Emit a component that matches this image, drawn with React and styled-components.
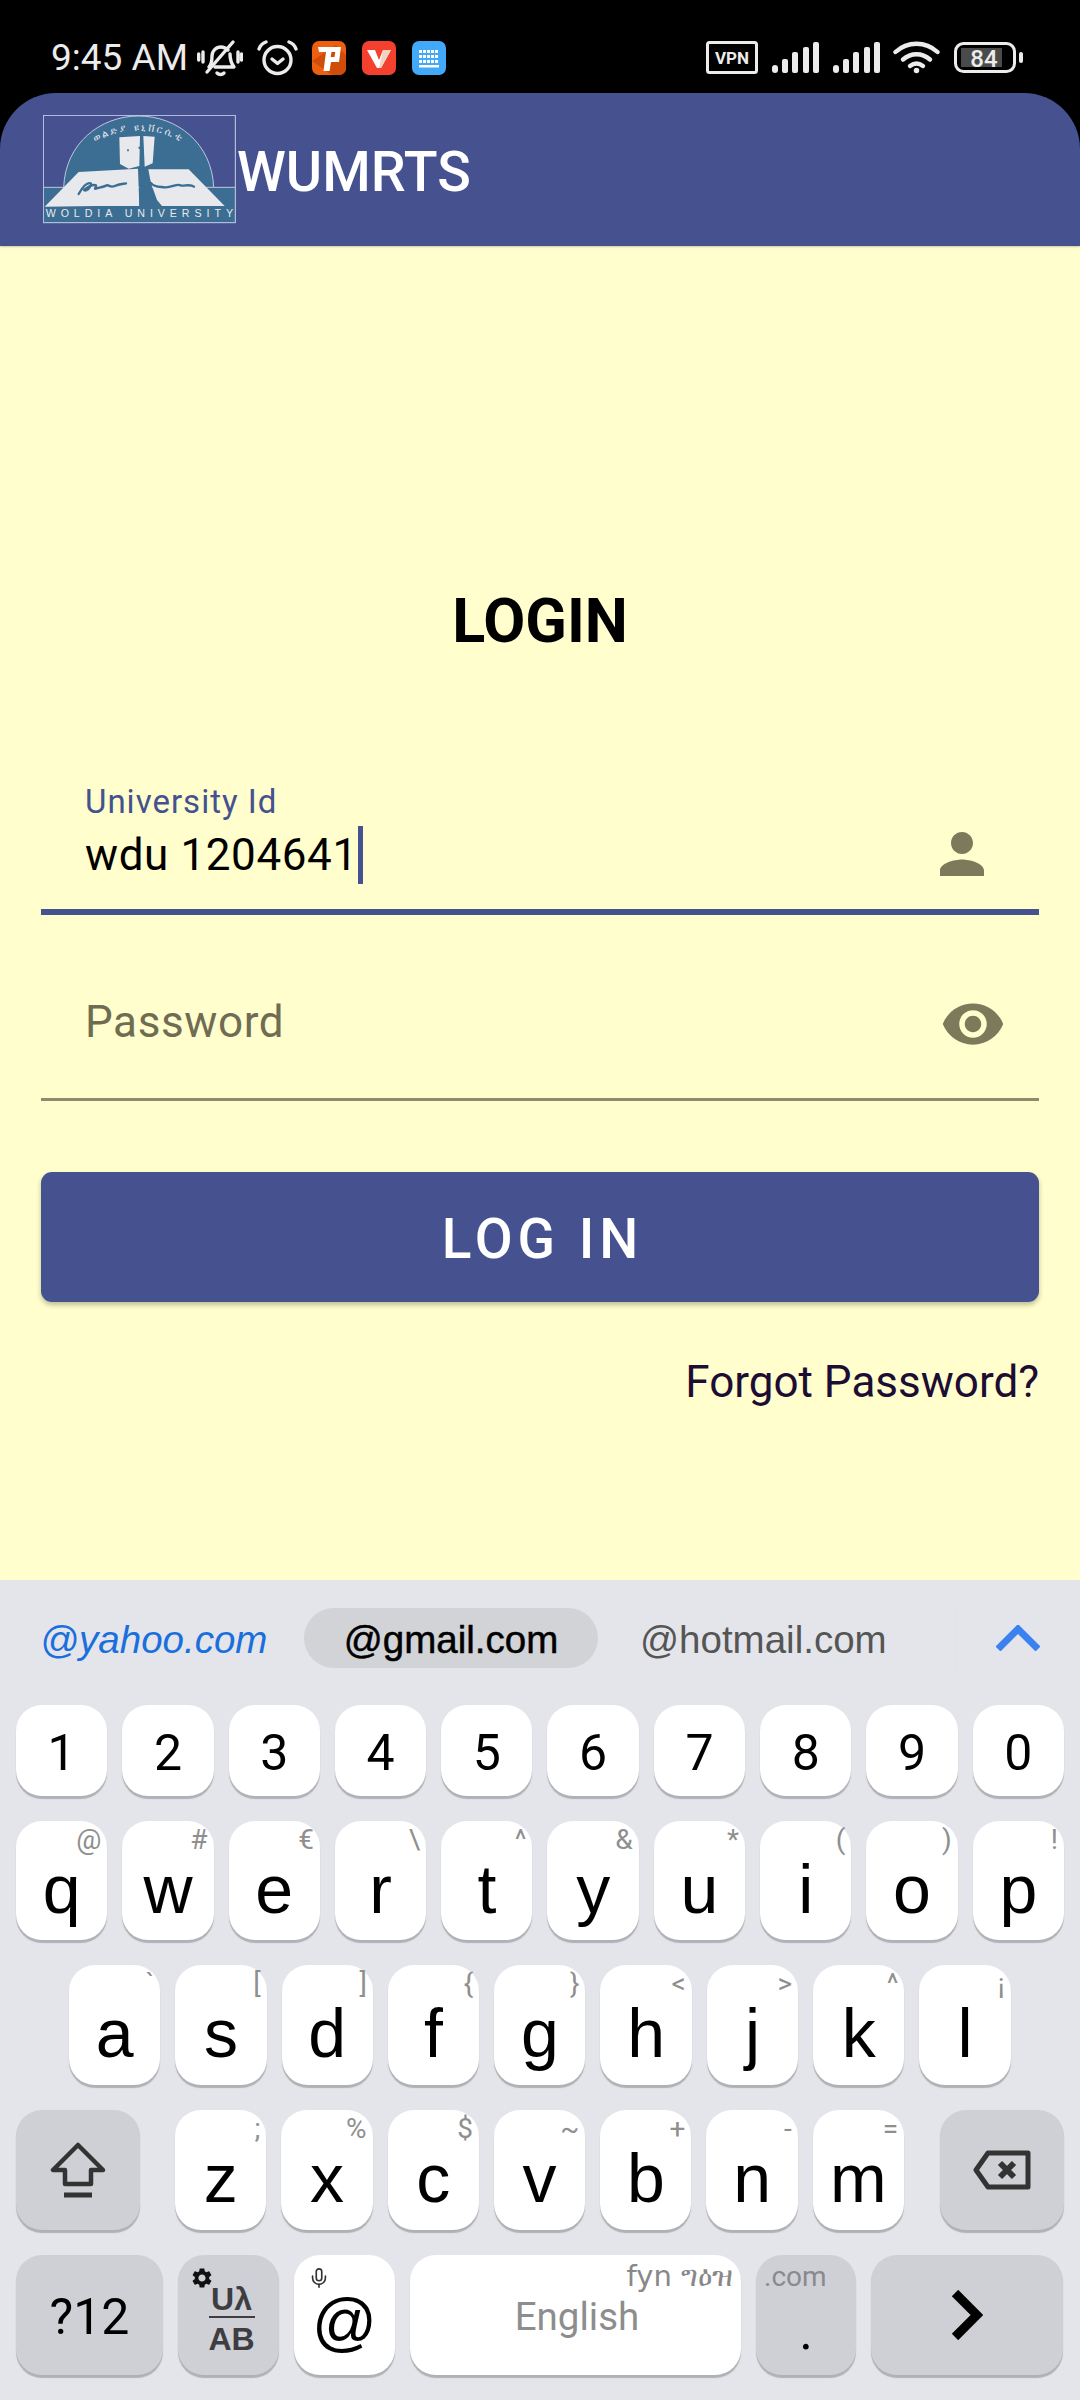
import React from "react";
import styled, { createGlobalStyle } from "styled-components";
import { MdSettings } from "react-icons/md";
import { Mic } from "lucide-react";

const GlobalStyle = createGlobalStyle`
  html, body {
    margin: 0;
    padding: 0;
    background: #000;
  }
  * {
    box-sizing: border-box;
  }
`;

const Page = styled.div`
  width: 1080px;
  height: 2400px;
  display: flex;
  flex-direction: column;
  background: #000;
  font-family: Roboto, sans-serif;
  overflow: hidden;
`;

/* status bar */
const StatusBar = styled.div`
  height: 93px;
  flex: none;
  display: flex;
  align-items: center;
  justify-content: space-between;
  padding: 22px 57px 0 51px;
  color: #ececec;
`;
const StatusGroup = styled.div`
  display: flex;
  align-items: center;
`;
const Clock = styled.span`
  font-size: 37px;
  line-height: 40px;
  margin-right: 9px;
`;
const StatusIcon = styled.svg`
  display: block;
  flex: none;
  margin-left: ${(p) => p.$gap || 0}px;
`;

/* app bar */
const AppBar = styled.header`
  height: 153px;
  flex: none;
  display: flex;
  align-items: center;
  padding: 0 0 0 43px;
  background: #45528f;
  border-radius: 56px 56px 0 0;
  box-shadow: 0 1px 2px rgba(0, 0, 0, 0.2);
  position: relative;
  z-index: 1;
`;
const LogoSvg = styled.svg`
  display: block;
  flex: none;
`;
const Title = styled.h1`
  margin: 7px 0 0 0;
  color: #fff;
  font-size: 55.5px;
  font-weight: 500;
  line-height: 64px;
`;

/* login form */
const Main = styled.main`
  height: 1334px;
  flex: none;
  display: flex;
  flex-direction: column;
  padding: 340px 41px 0;
  background: #fffecc;
`;
const Heading = styled.h2`
  margin: 0;
  text-align: center;
  color: #000;
  font-size: 61px;
  font-weight: 700;
  line-height: 70px;
`;
const Field = styled.div`
  display: flex;
  align-items: flex-end;
  justify-content: space-between;
  height: ${(p) => p.$height}px;
  margin-top: ${(p) => p.$top}px;
  padding: 0 ${(p) => p.$iconInset}px ${(p) => p.$pad}px 44px;
  border-bottom: ${(p) => (p.$focused ? "6px solid #45528f" : "3px solid #8f8c6e")};
`;
const FieldText = styled.div`
  display: flex;
  flex-direction: column;
  margin-bottom: ${(p) => p.$lift}px;
`;
const FloatLabel = styled.label`
  color: #45528f;
  font-size: 33px;
  line-height: 40px;
  letter-spacing: 1px;
  margin-bottom: 9px;
`;
const Value = styled.div`
  display: flex;
  align-items: center;
  height: 48px;
  color: #000;
  font-size: 44px;
  line-height: 48px;
  letter-spacing: 0.6px;
  white-space: nowrap;
`;
const Placeholder = styled(Value)`
  color: #6f6c53;
`;
const Caret = styled.span`
  flex: none;
  width: 5px;
  height: 58px;
  background: #45528f;
`;
const FieldIcon = styled.svg`
  display: block;
  flex: none;
  fill: #7d7a5c;
`;
const LoginButton = styled.button`
  height: 130px;
  margin-top: 71px;
  padding: 4px 0 0 5px;
  border: 0;
  border-radius: 11px;
  background: #45528f;
  color: #fff;
  font-family: Roboto, sans-serif;
  font-size: 55px;
  font-weight: 500;
  letter-spacing: 5px;
  box-shadow: 0 3px 5px rgba(0, 0, 0, 0.25);
`;
const ForgotLink = styled.a`
  margin-top: 55px;
  text-align: right;
  color: #1d0c33;
  font-size: 44px;
  line-height: 50px;
`;

/* keyboard */
const Keyboard = styled.section`
  height: 820px;
  flex: none;
  display: flex;
  flex-direction: column;
  background: #e4e5ea;
`;
const SuggestStrip = styled.div`
  height: 125px;
  flex: none;
  display: flex;
  align-items: center;
  padding: 0 40px 9px 40px;
  font-family: "Liberation Sans", Arial, sans-serif;
  font-size: 38.5px;
`;
const Suggestion = styled.span`
  flex: none;
  width: ${(p) => p.$width}px;
  margin-left: ${(p) => p.$left || 0}px;
  height: 60px;
  line-height: 64px;
  text-align: ${(p) => (p.$pill ? "center" : "left")};
  color: ${(p) => p.$color};
  font-style: ${(p) => (p.$italic ? "italic" : "normal")};
  background: ${(p) => (p.$pill ? "#d2d3d6" : "transparent")};
  border-radius: 30px;
  -webkit-text-stroke: ${(p) => (p.$pill ? "0.5px #000" : "0")};
`;
const StripDivider = styled.span`
  width: 2px;
  height: 62px;
  background: #e1e2e7;
`;
const ExpandIcon = styled.svg`
  display: block;
  flex: none;
  margin-left: 40px;
`;
const KeyGrid = styled.div`
  display: grid;
  grid-template-rows: 94px 122px 123px 123px 123px;
  row-gap: 22px;
  padding: 0 16px;
`;
const KeyRow = styled.div`
  display: flex;
  column-gap: ${(p) => (p.$gap === undefined ? 15 : p.$gap)}px;
  padding-left: ${(p) => p.$inset || 0}px;
`;
const InnerRow = styled(KeyRow)`
  margin: 0 36px 0 35px;
`;
const Key = styled.div`
  position: relative;
  flex: none;
  width: ${(p) => p.$width || 91.3}px;
  height: calc(100% - 3px);
  display: flex;
  justify-content: center;
  align-items: ${(p) => (p.$centered ? "center" : "flex-start")};
  padding-top: ${(p) => (p.$digit ? 4 : p.$centered ? 0 : 34)}px;
  border-radius: 26px;
  background: ${(p) => (p.$special ? "#cfd0d6" : "#fff")};
  box-shadow: 0 3px 1px #b0b1b6;
  color: #000;
  font-family: ${(p) => (p.$digit ? "Roboto" : '"Liberation Sans"')}, sans-serif;
  font-size: ${(p) => (p.$digit ? 50 : 68)}px;
  line-height: ${(p) => (p.$digit ? "50px" : "68px")};
`;
const Hint = styled.span`
  position: absolute;
  top: 4px;
  right: 6px;
  color: #8f8f8f;
  font-family: Roboto, sans-serif;
  font-size: 28px;
  line-height: 30px;
`;
const LangStack = styled.div`
  display: flex;
  flex-direction: column;
  align-items: center;
  width: 46px;
  margin: 8px 0 0 6px;
  color: #3d3d42;
  font-family: "Liberation Sans", sans-serif;
  font-size: 32px;
  font-weight: 700;
  line-height: 26px;
`;
const LangTop = styled.span`
  width: 100%;
  padding-bottom: 4px;
  text-align: center;
  border-bottom: 2px solid #3d3d42;
  margin-bottom: 8px;
  white-space: nowrap;
`;
const GearBadge = styled.span`
  position: absolute;
  top: 11px;
  left: 12px;
  display: flex;
  color: #111;
`;
const MicBadge = styled.span`
  position: absolute;
  top: 12px;
  left: 14px;
  display: flex;
  color: #333;
`;
const AtGlyph = styled.span`
  font-size: 64px;
  line-height: 64px;
  margin-top: 14px;
`;
const SpaceLabel = styled.span`
  color: #8d8d8d;
  font-family: Roboto, sans-serif;
  font-size: 38.5px;
  line-height: 48px;
  margin: 4px 0 0 3px;
`;
const SpaceHint = styled.span`
  position: absolute;
  top: 3px;
  right: 8px;
  color: #888;
  font-family: "DejaVu Sans", Roboto, sans-serif;
  font-size: 29px;
  line-height: 36px;
  white-space: nowrap;
`;
const ComHint = styled.span`
  position: absolute;
  top: 6px;
  left: 8px;
  color: #8a8a8e;
  font-family: Roboto, sans-serif;
  font-size: 28px;
  line-height: 32px;
`;
const PeriodGlyph = styled.span`
  margin-top: 34px;
  font-family: Roboto, sans-serif;
  font-size: 52px;
  line-height: 52px;
`;

const BellMuted = () => (
  <StatusIcon width="46" height="38" viewBox="0 0 46 38" fill="none" stroke="#ececec" strokeWidth="3.4" strokeLinecap="round" strokeLinejoin="round">
    <path d="M12 28c3-3 3-7 3-11 0-5 4-9 9-9 3 0 5 1 7 3" />
    <path d="M33 15c0 5 1 9 4 13H18" />
    <path d="M20 34c2 2 5 2 7 0" />
    <path d="M10 33 36 3" />
    <path d="M6 13v10M1.7 15v6M41 13v10M44.5 15v6" />
  </StatusIcon>
);

const AlarmIcon = () => (
  <StatusIcon $gap={14} width="41" height="36" viewBox="0 0 41 36" fill="none" stroke="#ececec" strokeWidth="3.4" strokeLinecap="round" strokeLinejoin="round">
    <circle cx="20.5" cy="20" r="13.5" />
    <path d="M15 19l5.5 4.5L26 19" />
    <path d="M2 9c1-3 4-6 7-7M39 9c-1-3-4-6-7-7" />
  </StatusIcon>
);

const PsiphonIcon = () => (
  <StatusIcon $gap={14} width="34" height="34" viewBox="0 0 34 34">
    <rect width="34" height="34" rx="7" fill="#ec5f10" />
    <path d="M0 20 20 34H27a7 7 0 0 0 7-7V14L24 4Z" fill="#cf4d08" />
    <path fillRule="evenodd" d="M6 6H29L27 21H19L17.5 30H11.5L14 11H7ZM19.5 11 18.7 16H22.5L23.3 11Z" fill="#fff" />
  </StatusIcon>
);

const VidmateIcon = () => (
  <StatusIcon $gap={16} width="34" height="34" viewBox="0 0 34 34">
    <rect width="34" height="34" rx="7" fill="#f4402f" />
    <path d="M5 9h8l4 10 4-10h8L19 27h-4Z" fill="#fff" />
    <path d="M21 9h8L19 27h-2Z" fill="#f1d4c0" />
  </StatusIcon>
);

const KeypadIcon = () => (
  <StatusIcon $gap={16} width="34" height="34" viewBox="0 0 34 34">
    <rect width="34" height="34" rx="7" fill="#42a8f8" />
    <g fill="#fff">
      {[9, 14, 19].map((y) =>
        [7, 11, 15, 19, 23].map((x) => <rect key={`${x}-${y}`} x={x} y={y} width="3" height="3" />)
      )}
      <rect x="7" y="24" width="20" height="2.5" />
    </g>
  </StatusIcon>
);

const VpnBadge = () => (
  <StatusIcon width="52" height="33" viewBox="0 0 52 33">
    <rect x="1.5" y="1.5" width="49" height="30" rx="2" fill="none" stroke="#ececec" strokeWidth="3" />
    <text x="26" y="23" textAnchor="middle" fill="#ececec" fontFamily="Roboto, sans-serif" fontWeight="700" fontSize="17">VPN</text>
  </StatusIcon>
);

const SignalIcon = ({ gap }) => (
  <StatusIcon $gap={gap} width="47" height="31" viewBox="0 0 47 31" fill="#ececec">
    <rect x="0" y="23" width="6" height="8" rx="3" />
    <rect x="10" y="17" width="6" height="14" rx="2" />
    <rect x="20" y="10" width="6" height="21" rx="2" />
    <rect x="31" y="5" width="6" height="26" rx="2" />
    <rect x="41" y="0" width="6" height="31" rx="2" />
  </StatusIcon>
);

const WifiIcon = () => (
  <StatusIcon $gap={13} width="47" height="33" viewBox="0 0 47 33" fill="none" stroke="#ececec" strokeWidth="4.4" strokeLinecap="round">
    <path d="M2.5 11c12-11 30-11 42 0" />
    <path d="M10 18.5c8-7 19-7 27 0" />
    <path d="M17 25c4-3 9-3 13 0" />
    <circle cx="23.5" cy="29.5" r="2" fill="#ececec" stroke="#ececec" strokeWidth="1.5" />
  </StatusIcon>
);

const BatteryIcon = () => (
  <StatusIcon $gap={14} width="69" height="31" viewBox="0 0 69 31">
    <rect x="1.5" y="1.5" width="59" height="28" rx="8" fill="none" stroke="#ececec" strokeWidth="3" />
    <rect x="7" y="6" width="41" height="19" fill="#4a4a4a" />
    <text x="30" y="24.5" textAnchor="middle" fill="#ececec" fontFamily="Roboto, sans-serif" fontWeight="500" fontSize="24">84</text>
    <rect x="65" y="10" width="4" height="11" rx="2" fill="#ececec" />
  </StatusIcon>
);

const UniversityLogo = () => (
  <LogoSvg width="194" height="109" viewBox="43 45 582 327">
    <rect x="44" y="262" width="576" height="106" fill="#3c6d92" />
    <path d="M105 262C110 130 215 48 330 48s220 82 225 214Z" fill="#3c6d92" stroke="#d7dced" strokeWidth="2.5" />
    <path d="M44 262h61M555 262h65" stroke="#d7dced" strokeWidth="2.5" />
    <rect x="44" y="46" width="576" height="322" fill="none" stroke="#c9cfea" strokeWidth="3" />
    <path d="M48 320 150 216 328 206 332 318 200 318Z" fill="#e8e9ec" />
    <path d="M352 208 480 208 588 318 400 318 385 300Z" fill="#e8e9ec" />
    <path d="M272 112 334 108 332 198 300 206 274 192Z" fill="#e8e9ec" />
    <path d="M344 108 378 110 372 190 348 200Z" fill="#e8e9ec" />
    <path d="M332 203h26l22 115h-48Z" fill="#3c6d92" />
    <path d="M150 282c10-18 24-36 36-32 6 4-12 28-20 20 10-8 26-18 36-14 2 6-8 12 0 10 14-4 24-6 32-10 8-2 10 8 24 2 12-6 22-6 34-8M368 250c8 12 28 10 40 12 20 2 36-12 48-6 10 4 26-6 40 4" fill="none" stroke="#3c6d92" strokeWidth="7" strokeLinecap="round" strokeLinejoin="round" />
    <path d="M298 148v6M332 140v6" stroke="#3c6d92" strokeWidth="5" />
    <path id="logoArc" d="M142 215C150 135 240 92 330 92s180 43 188 123" fill="none" />
    <text fill="#e8e9ec" fontFamily="DejaVu Sans, sans-serif" fontSize="30" letterSpacing="7">
      <textPath href="#logoArc" startOffset="50%" textAnchor="middle">ወልድያ ዩኒቨርሲቲ</textPath>
    </text>
    <text x="332" y="350" textAnchor="middle" fill="#e8e9ec" fontFamily="Liberation Sans, sans-serif" fontSize="32" textLength="562">WOLDIA UNIVERSITY</text>
  </LogoSvg>
);

const numberRow = ["1", "2", "3", "4", "5", "6", "7", "8", "9", "0"];
const topRow = [["q", "@"], ["w", "#"], ["e", "€"], ["r", "\\"], ["t", "^"], ["y", "&"], ["u", "*"], ["i", "("], ["o", ")"], ["p", "!"]];
const homeRow = [["a", "`"], ["s", "["], ["d", "]"], ["f", "{"], ["g", "}"], ["h", "<"], ["j", ">"], ["k", "^"], ["l", "¡"]];
const bottomRow = [["z", ";"], ["x", "%"], ["c", "$"], ["v", "~"], ["b", "+"], ["n", "-"], ["m", "="]];

const LetterKey = ({ letter, hint }) => (
  <Key>
    {letter}
    <Hint>{hint}</Hint>
  </Key>
);

export default function App() {
  return (
    <Page>
      <GlobalStyle />
      <StatusBar>
        <StatusGroup>
          <Clock>9:45 AM</Clock>
          <BellMuted />
          <AlarmIcon />
          <PsiphonIcon />
          <VidmateIcon />
          <KeypadIcon />
        </StatusGroup>
        <StatusGroup>
          <VpnBadge />
          <SignalIcon gap={14} />
          <SignalIcon gap={14} />
          <WifiIcon />
          <BatteryIcon />
        </StatusGroup>
      </StatusBar>

      <AppBar>
        <UniversityLogo />
        <Title>WUMRTS</Title>
      </AppBar>

      <Main>
        <Heading>LOGIN</Heading>
        <Field $focused $top={126} $height={133} $pad={22} $iconInset={44}>
          <FieldText $lift={8}>
            <FloatLabel>University Id</FloatLabel>
            <Value>
              wdu 1204641
              <Caret />
            </Value>
          </FieldText>
          <FieldIcon width="66" height="66" viewBox="0 0 24 24">
            <path d="M12 12c2.21 0 4-1.79 4-4s-1.79-4-4-4-4 1.79-4 4 1.79 4 4 4zm0 2c-2.67 0-8 1.34-8 4v2h16v-2c0-2.66-5.33-4-8-4z" />
          </FieldIcon>
        </Field>
        <Field $top={30} $height={156} $pad={41} $iconInset={33}>
          <FieldText $lift={11}>
            <Placeholder>Password</Placeholder>
          </FieldText>
          <FieldIcon width="66" height="66" viewBox="0 0 24 24">
            <path d="M12 4.5C7 4.5 2.73 7.61 1 12c1.73 4.39 6 7.5 11 7.5s9.27-3.11 11-7.5c-1.73-4.39-6-7.5-11-7.5zM12 17c-2.76 0-5-2.24-5-5s2.24-5 5-5 5 2.24 5 5-2.24 5-5 5zm0-8c-1.66 0-3 1.34-3 3s1.34 3 3 3 3-1.34 3-3-1.34-3-3-3z" />
          </FieldIcon>
        </Field>
        <LoginButton>LOG IN</LoginButton>
        <ForgotLink>Forgot Password?</ForgotLink>
      </Main>

      <Keyboard>
        <SuggestStrip>
          <Suggestion $width={264} $color="#1a6fdc" $italic>@yahoo.com</Suggestion>
          <Suggestion $width={294} $color="#000" $pill>@gmail.com</Suggestion>
          <Suggestion $width={315} $left={42} $color="#555">@hotmail.com</Suggestion>
          <StripDivider />
          <ExpandIcon width="44" height="26" viewBox="0 0 44 26" fill="none" stroke="#3b82f0" strokeWidth="7" strokeLinejoin="miter">
            <path d="M2 24 22 4l20 20" />
          </ExpandIcon>
        </SuggestStrip>
        <KeyGrid>
          <KeyRow>
            {numberRow.map((n) => (
              <Key key={n} $digit $centered>{n}</Key>
            ))}
          </KeyRow>
          <KeyRow>
            {topRow.map(([l, h]) => (
              <LetterKey key={l} letter={l} hint={h} />
            ))}
          </KeyRow>
          <KeyRow $inset={53}>
            {homeRow.map(([l, h]) => (
              <LetterKey key={l} letter={l} hint={h} />
            ))}
          </KeyRow>
          <KeyRow $gap={0}>
            <Key $special $centered $width={124}>
              <svg width="56" height="56" viewBox="0 0 56 56" fill="none" stroke="#333" strokeWidth="4.5" strokeLinejoin="round">
                <path d="M28 3 3 28h12v14h26V28h12Z" />
                <path d="M14 53h28" strokeWidth="5" />
              </svg>
            </Key>
            <InnerRow>
              {bottomRow.map(([l, h]) => (
                <LetterKey key={l} letter={l} hint={h} />
              ))}
            </InnerRow>
            <Key $special $centered $width={124}>
              <svg width="58" height="40" viewBox="0 0 58 40" fill="none" stroke="#333" strokeWidth="5" strokeLinejoin="round">
                <path d="M15 3h40v34H15L3 20Z" />
                <path d="M27 13l14 14M41 13 27 27" strokeWidth="6" />
              </svg>
            </Key>
          </KeyRow>
          <KeyRow $gap={15}>
            <Key $special $centered $digit $width={147}>?12</Key>
            <Key $special $centered $width={101}>
              <GearBadge><MdSettings size={24} /></GearBadge>
              <LangStack>
                <LangTop>Uλ</LangTop>
                AB
              </LangStack>
            </Key>
            <Key $centered $width={101}>
              <MicBadge><Mic size={22} strokeWidth={1.8} /></MicBadge>
              <AtGlyph>@</AtGlyph>
            </Key>
            <Key $centered $width={331}>
              <SpaceHint>fyn ግዕዝ</SpaceHint>
              <SpaceLabel>English</SpaceLabel>
            </Key>
            <Key $special $centered $width={100}>
              <ComHint>.com</ComHint>
              <PeriodGlyph>.</PeriodGlyph>
            </Key>
            <Key $special $centered $width={192}>
              <svg width="32" height="50" viewBox="0 0 32 50" fill="none" stroke="#000" strokeWidth="9">
                <path d="M4 3l22 22L4 47" />
              </svg>
            </Key>
          </KeyRow>
        </KeyGrid>
      </Keyboard>
    </Page>
  );
}
